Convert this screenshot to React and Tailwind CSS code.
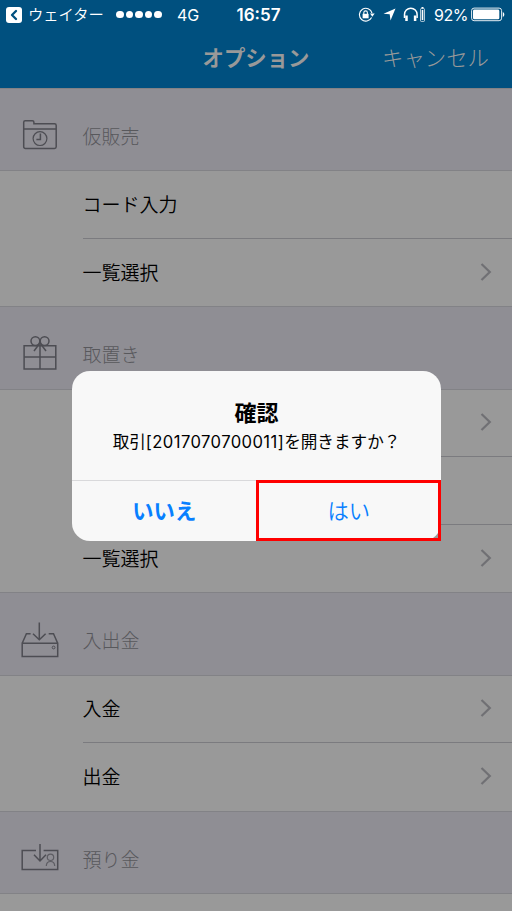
import { ChevronLeft } from 'lucide-react';

function StatusBar() {
  return (
    <div className="flex h-[29px] items-center text-white">
      <div className="ml-[6px] flex h-[16px] w-[16px] items-center justify-center rounded-[3px] bg-white text-[#00507f]">
        <ChevronLeft className="shrink-0" size={16} strokeWidth={3.5} />
      </div>
      <span className="ml-[6px] w-[76px] whitespace-nowrap text-[15.3px] font-[350] leading-none">ウェイター</span>
      <div className="ml-[12px] flex gap-[2px]">
        {[1, 2, 3, 4, 5].map((dot) => (
          <span key={dot} className="h-[7.6px] w-[7.6px] rounded-full bg-white" />
        ))}
      </div>
      <span className="ml-[15px] w-[22px] text-[16px] leading-none">4G</span>
      <span className="ml-[37.5px] w-[45px] whitespace-nowrap pt-[1px] text-[17px] font-semibold leading-none">16:57</span>
      <svg className="ml-[76.5px]" width="17" height="16" viewBox="0 0 17 16" fill="none" stroke="currentColor">
        <path d="M13.6 10.5A6.4 6.4 0 1 1 14 6" strokeWidth="1.1" />
        <path d="M12 6.5h4.7L14.3 9.7z" fill="currentColor" stroke="none" />
        <rect x="4.6" y="6.8" width="6" height="4.5" fill="currentColor" stroke="none" />
        <path d="M5.8 7V5.7a1.8 1.8 0 0 1 3.6 0V7" strokeWidth="1.1" />
      </svg>
      <svg className="ml-[8px]" width="13" height="13" viewBox="0 0 13 13" fill="currentColor">
        <path d="M12.5.5 7.5 12.5 6.7 6.3.5 5.8z" />
      </svg>
      <svg className="ml-[7px]" width="16" height="15" viewBox="0 0 16 15" fill="none" stroke="currentColor">
        <path d="M1.5 11V7.5a6.3 6.3 0 0 1 12.6 0V11" strokeWidth="1.5" />
        <path d="M3.5 8.5V14M12.1 8.5V14" strokeWidth="2.5" />
      </svg>
      <svg className="ml-[1px]" width="5" height="15" viewBox="0 0 5 15" fill="none" stroke="currentColor">
        <rect x=".5" y="1.6" width="4" height="12.8" rx=".7" strokeWidth=".7" />
        <path d="M1.5.8h2M2.5 3v10" strokeWidth="1.6" />
      </svg>
      <span className="ml-[9px] w-[33px] whitespace-nowrap text-[16px] leading-none tracking-[-0.5px]">92%</span>
      <svg className="ml-[4px] shrink-0" width="34" height="15" viewBox="0 0 34 15" fill="none" stroke="currentColor">
        <rect x=".6" y="1.1" width="30" height="12.6" rx="2.5" strokeWidth=".9" />
        <rect x="2" y="2.5" width="26.3" height="9.8" rx="1.4" fill="currentColor" stroke="none" />
        <path d="M31.8 5v5c2-.7 2-4.3 0-5z" fill="currentColor" stroke="none" />
      </svg>
    </div>
  );
}

function FolderIcon() {
  return (
    <svg width="40" height="40" viewBox="0 1 40 40" fill="none" stroke="currentColor" strokeWidth="1.5">
      <path d="M3.7 14V7.2a1.5 1.5 0 0 1 1.5-1.5h7.2a1.5 1.5 0 0 1 1.5 1.5v1.5h20.6A1.7 1.7 0 0 1 36.2 10.4v21.4a1.7 1.7 0 0 1-1.7 1.7H5.4a1.7 1.7 0 0 1-1.7-1.7V14zM3.7 14h32.5" />
      <circle cx="20" cy="23.6" r="6.9" strokeWidth="1.2" />
      <path d="M20.4 18.6v5.8h-4" />
    </svg>
  );
}

function GiftIcon() {
  return (
    <svg width="40" height="40" viewBox="0 0.5 40 40" fill="none" stroke="currentColor" strokeWidth="1.5">
      <path d="M4.1 12.2h31.7v23.4H4.1zM4.1 23.5h31.7M20 11v24.6" />
      <circle cx="15.4" cy="7.6" r="4.4" />
      <circle cx="24.6" cy="7.6" r="4.4" />
      <path d="M20 9.5 14 17.5M20 9.5l6 8" />
    </svg>
  );
}

function DrawerIcon() {
  return (
    <svg width="40" height="40" viewBox="0 0 40 40" fill="none" stroke="currentColor" strokeWidth="1.5">
      <path d="M2.2 23.3h35.5v13.2H2.2zM2.2 23.3l4.2-9.6h4.2M37.7 23.3l-4.2-9.6h-4.8" />
      <path d="M19.3 2.5v17M13 13.8l6.3 6 6.3-6" />
      <circle cx="33.6" cy="27.5" r="1.4" strokeWidth="1" />
    </svg>
  );
}

function DepositIcon() {
  return (
    <svg width="40" height="40" viewBox="0 0 40 40" fill="none" stroke="currentColor" strokeWidth="1.5">
      <path d="M16 12.4H2.2v19.2h35.5V12.4H23.6" />
      <path d="M20 6v17M14 16.8l6 6.2 6-6.2" />
      <g strokeWidth="1.2" opacity=".75">
        <circle cx="30.5" cy="19.3" r="3.2" />
        <path d="M26.3 28c.2-6 8.2-6 8.4 0" />
      </g>
    </svg>
  );
}

function SectionHeader({ icon, title }) {
  return (
    <div className="flex h-[83.2px] shrink-0 items-center border-y border-[#828286] bg-[#8f8e94] pl-[20px] pt-[14px]">
      <div className="-mt-[2px] text-[#4d4d53]">{icon}</div>
      <span className="ml-[22.5px] pt-[2px] text-[19px] font-light leading-none text-[#58585c]">{title}</span>
    </div>
  );
}

function Chevron() {
  return (
    <svg className="-mt-[1px]" width="12" height="20" viewBox="0 0 12 20" fill="none" stroke="#707074" strokeWidth="2.2">
      <path d="m1.5 2 8.3 8-8.3 8" />
    </svg>
  );
}

function Row({ label, chevron, last }) {
  return (
    <div className="h-[67.6px] shrink-0 pl-[82.5px]">
      <div className={`flex h-full items-center justify-between pr-[20px] ${last ? '' : 'border-b border-[#7b7b7f]'}`}>
        <span className="pt-[2px] text-[19px] font-[350] leading-none text-black">{label}</span>
        {chevron && <Chevron />}
      </div>
    </div>
  );
}

function ConfirmDialog() {
  return (
    <div className="absolute left-[72px] top-[371px] h-[170px] w-[369px]">
      <div className="flex h-full flex-col overflow-hidden rounded-[18px] bg-[#f8f8f8]">
        <div className="flex h-[110px] flex-col items-center border-b border-[#d9d9db] pt-[30px]">
          <h2 className="text-[22px] font-bold leading-[24px] text-black">確認</h2>
          <p className="mt-[7px] whitespace-nowrap text-[16.6px] leading-[20px] text-black">
            取引<span className="tracking-[0.42px]">[2017070700011]</span>を開きますか？
          </p>
        </div>
        <div className="grid flex-1 grid-cols-2 pt-[2px] text-[21.3px] text-[#087fff]">
          <button className="font-bold">いいえ</button>
          <button className="font-[350]">はい</button>
        </div>
      </div>
      {/* highlight around the confirm button */}
      <div className="absolute bottom-0 right-0 h-[61px] w-[185px] border-3 border-[#ff0000]" />
    </div>
  );
}

export default function App() {
  return (
    <div className="relative flex h-[911px] w-[512px] flex-col overflow-hidden bg-[#999999] font-['Inter','Noto_Sans_CJK_JP',sans-serif]">
      <header className="h-[88px] shrink-0 bg-[#00507f]">
        <StatusBar />
        <div className="grid h-[58px] grid-cols-[1fr_auto_1fr] items-center pt-[1px] text-[21.4px] leading-none text-[#999999]">
          <span />
          <h1 className="font-bold">オプション</h1>
          <span className="pr-[23px] text-right font-light">キャンセル</span>
        </div>
      </header>

      <SectionHeader icon={<FolderIcon />} title="仮販売" />
      <Row label="コード入力" />
      <Row label="一覧選択" chevron last />

      <SectionHeader icon={<GiftIcon />} title="取置き" />
      <Row chevron />
      <Row />
      <Row label="一覧選択" chevron last />

      <SectionHeader icon={<DrawerIcon />} title="入出金" />
      <Row label="入金" chevron />
      <Row label="出金" chevron last />

      <SectionHeader icon={<DepositIcon />} title="預り金" />
      <Row last />

      <ConfirmDialog />
    </div>
  );
}
